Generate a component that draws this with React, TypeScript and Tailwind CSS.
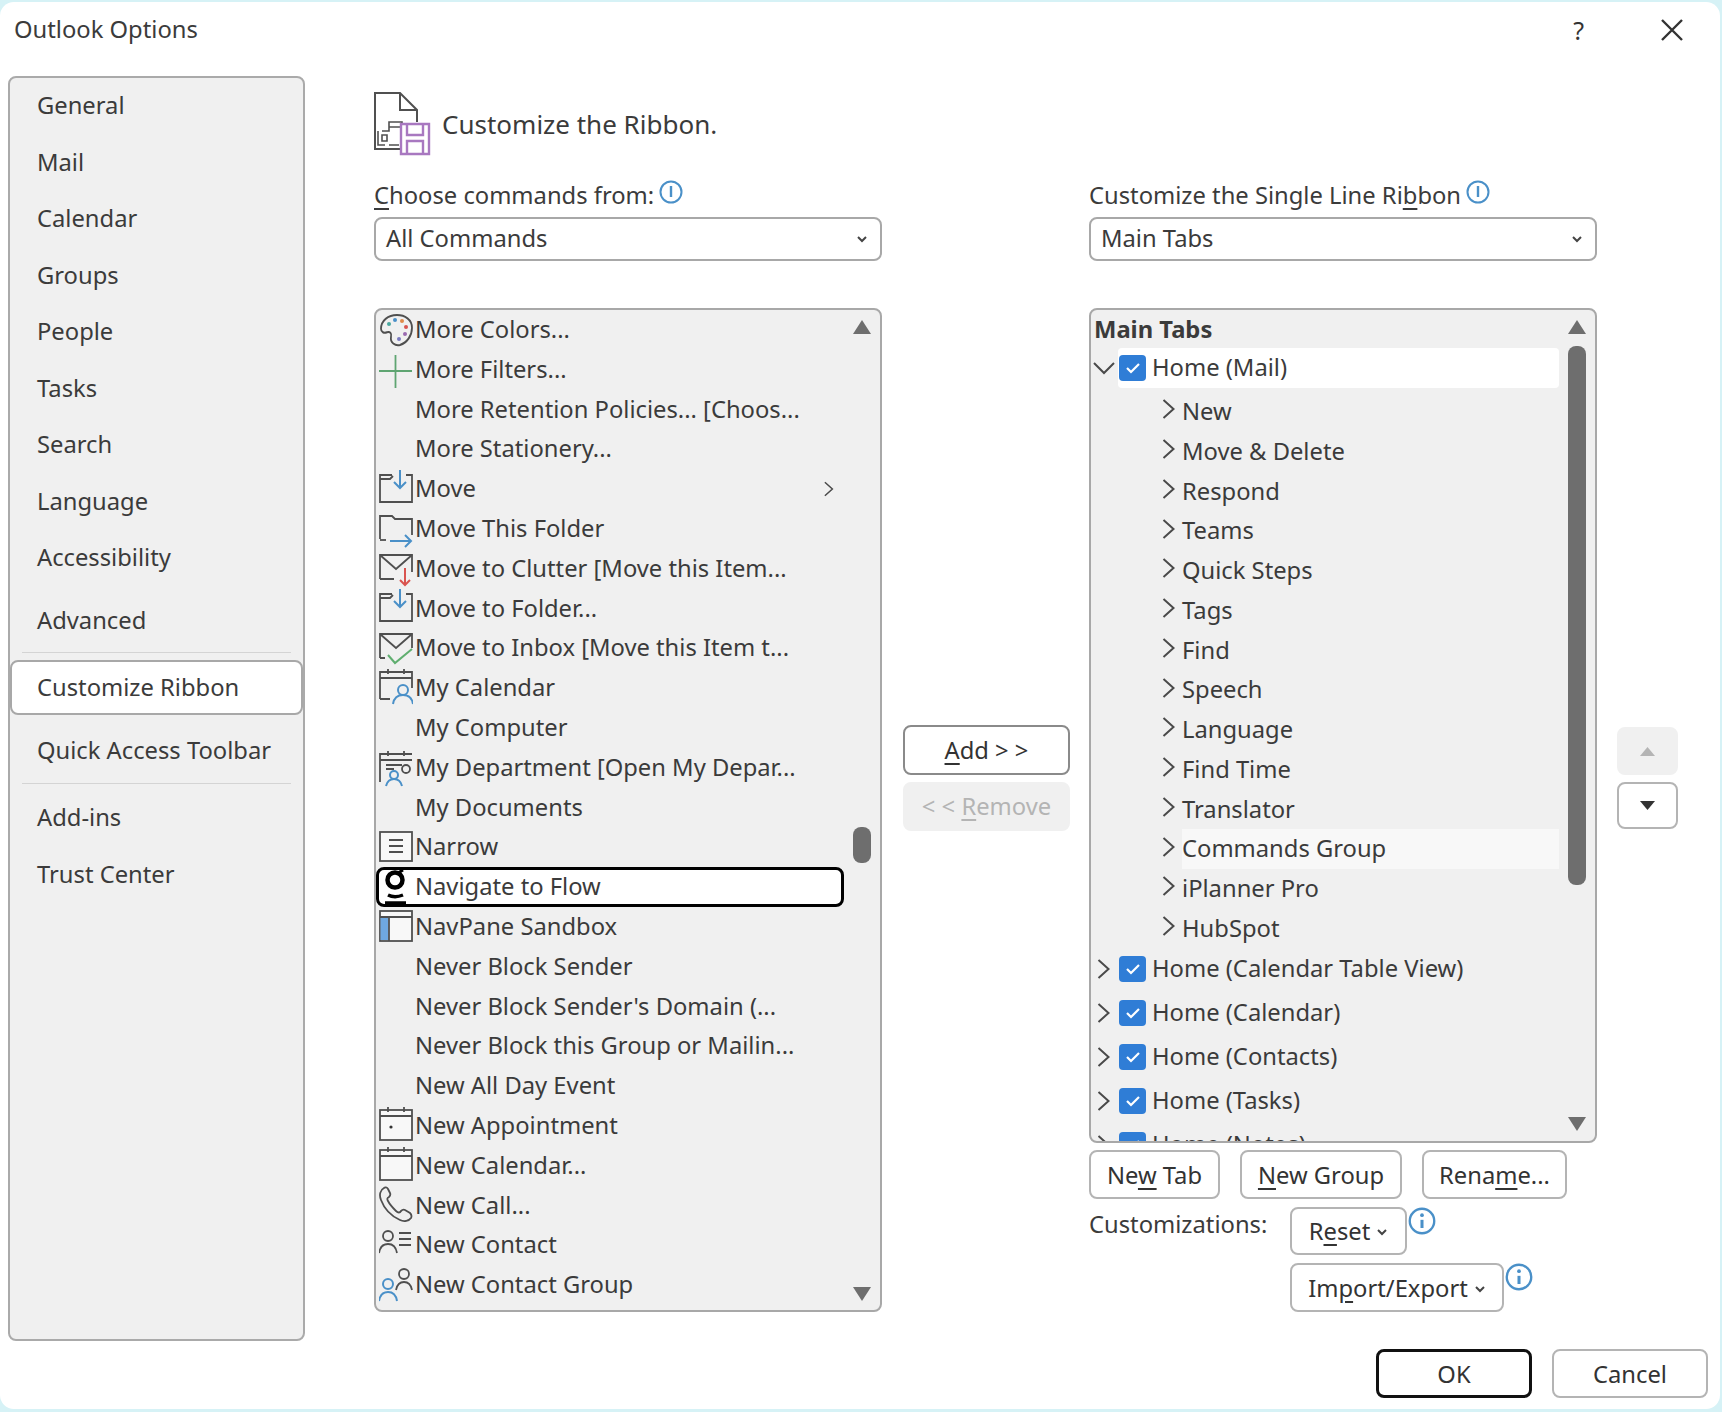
import type { ReactNode } from "react";

const FONT = "font-['Noto_Sans',sans-serif]";
const STROKE = "#4f4f4f";
const BLUE = "#4a90c8";

type IconName =
  | "palette" | "plus" | "moveDown" | "moveRight" | "clutter" | "inbox" | "myCal" | "dept"
  | "narrow" | "flow" | "navPane" | "appt" | "cal" | "call" | "contact" | "group";

function ListIcon({ name }: { name: IconName }) {
  return (
    <svg width="34" height="40" viewBox="0 0 34 40" fill="none" stroke={STROKE} strokeWidth="1.8" className="shrink-0">
      {name === "palette" && (
        <>
          <path transform="translate(0 -3) scale(1 1.15)" d="M18 7C9 7 2 12 2 19c0 3 3 4 6 3 3-1 5 1 4 4-1 5 4 8 9 7 7-2 12-8 12-15C33 11 26 7 18 7Z" />
          <circle cx="10" cy="14" r="2" fill="#4aa8a0" stroke="none" />
          <circle cx="16" cy="10" r="2" fill="#4a90c8" stroke="none" />
          <circle cx="23" cy="11" r="2" fill="#e08a4a" stroke="none" />
          <circle cx="27" cy="17" r="2" fill="#d9534f" stroke="none" />
          <circle cx="26" cy="24" r="2" fill="#9a6ab0" stroke="none" />
          <circle cx="20" cy="29" r="2" fill="#7a7ac0" stroke="none" />
        </>
      )}
      {name === "plus" && <path d="M0 21h33M16.5 5v33" stroke="#5fa572" />}
      {name === "moveDown" && (
        <>
          <path d="M27 6h6v27H1V6h12" />
          <path d="M1 10h10l3-3" />
          <path d="M21 1v18M15 13l6 6 6-6" stroke={BLUE} strokeWidth="2" />
        </>
      )}
      {name === "moveRight" && (
        <>
          <path d="M1 30V7h12l3 3h17v16" />
          <path d="M1 31h6" />
          <path d="M11 32h21M26 26l6 6-6 6" stroke={BLUE} strokeWidth="2" />
        </>
      )}
      {name === "clutter" && (
        <>
          <path d="M1 30V6h32v17M1 30h14" />
          <path d="M1 6l16 14L33 6" />
          <path d="M26 19v17M21 31l5 5 5-5" stroke="#d9534f" strokeWidth="2" />
        </>
      )}
      {name === "inbox" && (
        <>
          <path d="M1 30V6h32v14M1 30h5" />
          <path d="M1 6l16 14L33 6" />
          <path d="M9 27l7 8 17-14" stroke="#5fae6f" strokeWidth="2" />
        </>
      )}
      {name === "myCal" && (
        <>
          <path d="M1 31V4h32v16M1 31h10M1 10h32M9 1v5M25 1v5" />
          <circle cx="24" cy="22" r="5" stroke={BLUE} strokeWidth="2" />
          <path d="M14 36c1-6 5-9 10-9s9 3 10 9" stroke={BLUE} strokeWidth="2" />
        </>
      )}
      {name === "dept" && (
        <>
          <path d="M1 34V6h32M1 12h32M9 3v5M25 3v5M7 17h16M7 21h8" />
          <circle cx="27" cy="21" r="4" />
          <circle cx="15" cy="27" r="4" stroke={BLUE} strokeWidth="2" />
          <path d="M7 38c1-4 4-7 8-7s7 3 8 7" stroke={BLUE} strokeWidth="2" />
        </>
      )}
      {name === "narrow" && (
        <>
          <rect x="1" y="5" width="32" height="29" fill="#f8f8f8" />
          <path d="M10 13h14M10 19h14M10 25h14" />
        </>
      )}
      {name === "flow" && (
        <>
          <circle cx="16" cy="13" r="7.5" stroke="#000" strokeWidth="4.5" />
          <path d="M24 3l-5 3" stroke="#000" strokeWidth="3" />
          <path d="M9 28c4 2 10 2 15 0M6 36h21" stroke="#000" strokeWidth="3.5" />
        </>
      )}
      {name === "navPane" && (
        <>
          <rect x="1" y="4" width="32" height="30" fill="#f8f8f8" />
          <rect x="1.5" y="11" width="8" height="22" fill="#6fa8e0" stroke="none" />
          <path d="M1 10h32M10 10v24" />
        </>
      )}
      {name === "appt" && (
        <>
          <rect x="1" y="4" width="32" height="30" fill="#f8f8f8" />
          <path d="M1 10h32M9 1v5M25 1v5" />
          <circle cx="12" cy="21" r="1.6" fill="#333" stroke="none" />
        </>
      )}
      {name === "cal" && (
        <>
          <rect x="1" y="4" width="32" height="30" fill="#f8f8f8" />
          <path d="M1 10h32M9 1v5M25 1v5" />
        </>
      )}
      {name === "call" && (
        <path d="M5 1C1 3 0 8 2 13c3 8 10 16 19 20 4 2 9 1 11-2 1-2 1-3-1-5l-5-3c-2-1-3 0-4 1-1 2-3 2-5 0-3-3-6-6-8-10-1-2-1-3 1-4 1-1 2-2 1-4L9 2C8 0 6 0 5 1Z" transform="translate(0 2)" />
      )}
      {name === "contact" && (
        <>
          <circle cx="9" cy="11" r="5" />
          <path d="M0 28c1-6 4-9 9-9s8 3 9 9M20 8h12M20 14h12M20 20h12" />
        </>
      )}
      {name === "group" && (
        <>
          <circle cx="25" cy="9" r="5" />
          <path d="M17 25c1-5 4-8 8-8s7 3 8 8" />
          <circle cx="9" cy="19" r="5" stroke={BLUE} strokeWidth="2" />
          <path d="M0 36c1-6 4-9 9-9s8 3 9 9" stroke={BLUE} strokeWidth="2" />
        </>
      )}
    </svg>
  );
}

const commands: { label: string; icon?: IconName; submenu?: boolean; focused?: boolean }[] = [
  { label: "More Colors...", icon: "palette" },
  { label: "More Filters...", icon: "plus" },
  { label: "More Retention Policies... [Choos..." },
  { label: "More Stationery..." },
  { label: "Move", icon: "moveDown", submenu: true },
  { label: "Move This Folder", icon: "moveRight" },
  { label: "Move to Clutter [Move this Item...", icon: "clutter" },
  { label: "Move to Folder...", icon: "moveDown" },
  { label: "Move to Inbox [Move this Item t...", icon: "inbox" },
  { label: "My Calendar", icon: "myCal" },
  { label: "My Computer" },
  { label: "My Department [Open My Depar...", icon: "dept" },
  { label: "My Documents" },
  { label: "Narrow", icon: "narrow" },
  { label: "Navigate to Flow", icon: "flow", focused: true },
  { label: "NavPane Sandbox", icon: "navPane" },
  { label: "Never Block Sender" },
  { label: "Never Block Sender's Domain (..." },
  { label: "Never Block this Group or Mailin..." },
  { label: "New All Day Event" },
  { label: "New Appointment", icon: "appt" },
  { label: "New Calendar...", icon: "cal" },
  { label: "New Call...", icon: "call" },
  { label: "New Contact", icon: "contact" },
  { label: "New Contact Group", icon: "group" },
];

const groups = [
  "New", "Move & Delete", "Respond", "Teams", "Quick Steps", "Tags", "Find",
  "Speech", "Language", "Find Time", "Translator", "Commands Group", "iPlanner Pro", "HubSpot",
];

const homeTabs = ["Home (Calendar Table View)", "Home (Calendar)", "Home (Contacts)", "Home (Tasks)", "Home (Notes)"];

function Chevron({ dir = "right", className = "" }: { dir?: "right" | "down"; className?: string }) {
  return (
    <svg width="14" height="20" viewBox="0 0 14 20" fill="none" stroke="#4a4a4a" strokeWidth="2" overflow="visible" className={`shrink-0 ${className}`}>
      {dir === "right" ? <path d="M1.5 1l10 9-10 9" /> : <path d="M-3 5l10 10 10-10" />}
    </svg>
  );
}

function SmallCaret({ className = "" }: { className?: string }) {
  return (
    <svg width="12" height="8" viewBox="0 0 12 8" fill="none" stroke="#444" strokeWidth="2" className={className}>
      <path d="M2 2l4 4 4-4" />
    </svg>
  );
}

function Info({ size = 24, dot = false, className = "" }: { size?: number; dot?: boolean; className?: string }) {
  return (
    <svg width={size} height={size} viewBox="0 0 24 24" fill="none" stroke={BLUE} className={`shrink-0 ${className}`}>
      <circle cx="12" cy="12" r="10.5" strokeWidth="2" />
      {dot ? (
        <>
          <circle cx="12" cy="7" r="1.6" fill={BLUE} stroke="none" />
          <path d="M12 11v7" strokeWidth="2.6" />
        </>
      ) : (
        <path d="M12 6v11" strokeWidth="2.4" />
      )}
    </svg>
  );
}

function Triangle({ dir, fill = "#6e6e6e", small = false }: { dir: "up" | "down"; fill?: string; small?: boolean }) {
  const w = small ? 15 : 18;
  const h = small ? 9 : 14;
  return (
    <svg width={w} height={h} viewBox="0 0 18 14" preserveAspectRatio="none" fill={fill} className="shrink-0">
      {dir === "up" ? <path d="M9 0l9 14H0Z" /> : <path d="M0 0h18L9 14Z" />}
    </svg>
  );
}

const tones = {
  normal: "border-2 border-[#b4b4b4] bg-white text-[#333]",
  strong: "border-2 border-[#8a8a8a] bg-white text-[#333]",
  disabled: "border-2 border-[#f0f0f0] bg-[#f0f0f0] text-[#b4b4b4]",
  primary: "border-[3.5px] border-[#111] bg-white text-[#333]",
};

function Btn({ className, tone = "normal", children }: { className: string; tone?: keyof typeof tones; children: ReactNode }) {
  return (
    <button type="button" className={`flex items-center justify-center rounded-lg ${tones[tone]} ${className}`}>
      {children}
    </button>
  );
}

function Select({ value }: { value: string }) {
  return (
    <div className="flex h-11 items-center justify-between rounded-lg border-2 border-[#a8a8a8] bg-white pl-2.5 pr-3">
      <span>{value}</span>
      <SmallCaret />
    </div>
  );
}

function CommandRow({ label, icon, submenu, focused }: (typeof commands)[number]) {
  return (
    <div className={`flex h-[39.8px] items-center pl-[3px] ${focused ? "rounded-lg bg-white outline-3 -outline-offset-3 outline-black" : ""}`}>
      <span className="w-[36px] shrink-0">{icon && <ListIcon name={icon} />}</span>
      <span className="whitespace-nowrap">{label}</span>
      {submenu && <Chevron className="ml-auto mr-[8px] scale-75" />}
    </div>
  );
}

function HomeRow({ label, open }: { label: string; open?: boolean }) {
  return (
    <div className="flex h-10 items-center pl-[6px]">
      <Chevron dir={open ? "down" : "right"} />
      <div className={`ml-[7px] flex h-10 flex-1 items-center rounded-sm pl-[1px] ${open ? "bg-white" : ""}`}>
        <span className="flex h-[26px] w-[27px] shrink-0 items-center justify-center rounded-[4px] bg-[#2f7dd6]">
          <svg width="18" height="14" viewBox="0 0 18 14" fill="none" stroke="#fff" strokeWidth="2.2">
            <path d="M3 7l4 4 8-8" />
          </svg>
        </span>
        <span className="ml-[6px] whitespace-nowrap">{label}</span>
      </div>
    </div>
  );
}

function NavItem({ label, className = "h-[56.5px]" }: { label: string; className?: string }) {
  return <div className={`flex items-center pl-[27px] ${className}`}>{label}</div>;
}

export default function App() {
  return (
    <div className={`h-[1412px] w-[1722px] overflow-hidden bg-[#d6f2f6] pb-[3px] pr-[2px] pt-[2px] text-[23.75px] leading-none text-[#3b3b3b] ${FONT}`}>
      <div className="h-full rounded-[14px] bg-white">
        {/* title bar */}
        <div className="flex h-[56px] items-center justify-between pl-[14px] pr-[36px]">
          <span>Outlook Options</span>
          <div className="flex items-center gap-[76px]">
            <span className="text-[25px] text-[#333]">?</span>
            <svg width="24" height="24" viewBox="0 0 24 24" stroke="#333" strokeWidth="2.4">
              <path d="M2 2l20 20M22 2L2 22" />
            </svg>
          </div>
        </div>

        <div className="flex">
          {/* sidebar */}
          <nav className="ml-[8px] mt-[18px] h-[1265px] w-[297px] shrink-0 rounded-lg border-2 border-[#aaaaaa] bg-[#f0f0f0]">
            {["General", "Mail", "Calendar", "Groups", "People", "Tasks", "Search", "Language", "Accessibility"].map((item) => (
              <NavItem key={item} label={item} />
            ))}
            <NavItem label="Advanced" className="mt-[6px] h-[56.5px]" />
            <div className="mx-3 mt-[3px] h-px bg-[#d4d4d4]" />
            <div className="mt-[7px] flex h-[55px] items-center rounded-lg border-2 border-[#a8a8a8] bg-white pl-[25px]">Customize Ribbon</div>
            <NavItem label="Quick Access Toolbar" className="mt-[8px] h-[56px]" />
            <div className="mx-3 mt-[4px] h-px bg-[#d4d4d4]" />
            <NavItem label="Add-ins" className="mt-[6px] h-[56px]" />
            <NavItem label="Trust Center" className="h-[57px]" />
          </nav>

          <main className="ml-[69px] mt-[33px] flex-1 pr-[12px]">
            <div className="flex h-[66px] items-center">
              <svg width="58" height="66" viewBox="0 0 58 66" fill="none" stroke="#505050" strokeWidth="2" className="-ml-px shrink-0">
                <path d="M27 58H2V2h25l17 17v12" />
                <path d="M27 2v17h17" />
                <path d="M16 36h13v-5H16ZM9 40h7v-4M5 40v14h7M9 44h5v6H9ZM16 54h10" strokeWidth="1.6" />
                <g stroke="#a878c0" strokeWidth="2.4">
                  <path d="M28 33h28v30H28Z" fill="#fff" />
                  <path d="M34 33v11h16V33M34 63V50h16v13" />
                </g>
              </svg>
              <span className="ml-[11px] text-[26px]">Customize the Ribbon.</span>
            </div>

            <div className="flex items-start">
              {/* left column */}
              <section className="w-[508px] shrink-0">
                <div className="mt-6 flex h-[30px] items-center">
                  <span><u className="underline-offset-4">C</u>hoose commands from:</span>
                  <Info className="mb-2 ml-[5px]" />
                </div>
                <div className="mt-[6px]"><Select value="All Commands" /></div>
                <div className="mt-[47px] flex h-[1004px] overflow-hidden rounded-lg border-2 border-[#a8a8a8] bg-[#f0f0f0]">
                  <div className="w-[468px] shrink-0">
                    {commands.map((c) => <CommandRow key={c.label} {...c} />)}
                  </div>
                  <div className="flex flex-1 flex-col items-center pb-[9px] pt-[10px]">
                    <Triangle dir="up" />
                    <div className="mt-[493px] h-[36px] w-[18px] rounded-[8px] bg-[#6e6e6e]" />
                    <div className="mt-auto"><Triangle dir="down" /></div>
                  </div>
                </div>
              </section>

              {/* add / remove */}
              <div className="ml-[21px] mt-[568px] flex w-[167px] shrink-0 flex-col gap-[7px]">
                <Btn tone="strong" className="h-[50px] pt-[2px]"><span><u className="underline-offset-4">A</u>dd &gt; &gt;</span></Btn>
                <Btn tone="disabled" className="h-[49px]"><span>&lt; &lt; <u className="underline-offset-4">R</u>emove</span></Btn>
              </div>

              {/* right column */}
              <section className="ml-[19px] w-[508px] shrink-0">
                <div className="mt-6 flex h-[30px] items-center">
                  <span>Customize the Single Line Ri<u className="underline-offset-4">b</u>bon</span>
                  <Info className="mb-2 ml-[5px]" />
                </div>
                <div className="mt-[6px]"><Select value="Main Tabs" /></div>
                <div className="mt-[47px] flex h-[835px] overflow-hidden rounded-lg border-2 border-[#a8a8a8] bg-[#f0f0f0]">
                  <div className="w-[468px] shrink-0">
                    <div className="flex h-[38px] items-center pl-[3px] pt-[2px] font-bold">Main Tabs</div>
                    <HomeRow label="Home (Mail)" open />
                    <div className="pt-[4px]">
                      {groups.map((g) => (
                        <div key={g} className={`ml-[91px] flex h-[39.75px] items-center ${g === "Commands Group" ? "bg-[#f8f8f8]" : ""}`}>
                          <Chevron className="-ml-[20px] mb-[5px]" />
                          <span className="ml-[6px] whitespace-nowrap">{g}</span>
                        </div>
                      ))}
                    </div>
                    <div className="flex flex-col gap-1">
                      {homeTabs.map((t) => <HomeRow key={t} label={t} />)}
                    </div>
                  </div>
                  <div className="flex flex-1 flex-col items-center pb-[10px] pt-[10px]">
                    <Triangle dir="up" />
                    <div className="mt-[12px] h-[539px] w-[18px] rounded-[8px] bg-[#6e6e6e]" />
                    <div className="mt-auto"><Triangle dir="down" /></div>
                  </div>
                </div>
                <div className="mt-[7px] flex gap-[20px]">
                  <Btn className="h-[49px] w-[131px] pt-[2px]"><span>Ne<u className="underline-offset-4">w</u> Tab</span></Btn>
                  <Btn className="h-[49px] w-[162px] pt-[2px]"><span><u className="underline-offset-4">N</u>ew Group</span></Btn>
                  <Btn className="h-[49px] w-[145px] pt-[2px]"><span>Rena<u className="underline-offset-4">m</u>e...</span></Btn>
                </div>
                <div className="mt-[8px] flex">
                  <span className="mt-[6px] w-[201px] shrink-0">Customizations:</span>
                  <div className="flex flex-col gap-[8px]">
                    <div className="flex">
                      <Btn className="h-[48px] w-[117px] gap-1.5 pt-[2px]"><span>R<u className="underline-offset-4">e</u>set</span><SmallCaret /></Btn>
                      <Info size={28} dot className="ml-[1px]" />
                    </div>
                    <div className="flex">
                      <Btn className="h-[49px] w-[214px] gap-1.5 pt-[2px]"><span>Im<u className="underline-offset-4">p</u>ort/Export</span><SmallCaret /></Btn>
                      <Info size={28} dot className="ml-[1px]" />
                    </div>
                  </div>
                </div>
              </section>

              {/* move up / down */}
              <div className="ml-[20px] mt-[570px] flex w-[61px] shrink-0 flex-col gap-[7px]">
                <Btn tone="disabled" className="h-[48px]"><Triangle dir="up" fill="#b4b4b4" small /></Btn>
                <Btn className="h-[47px] border-[#a8a8a8]"><Triangle dir="down" fill="#333" small /></Btn>
              </div>
            </div>

            <div className="mt-[37px] flex justify-end gap-[20px]">
              <Btn tone="primary" className="h-[49px] w-[156px] pt-[2px]">OK</Btn>
              <Btn className="h-[49px] w-[156px] pt-[2px]">Cancel</Btn>
            </div>
          </main>
        </div>
      </div>
    </div>
  );
}
